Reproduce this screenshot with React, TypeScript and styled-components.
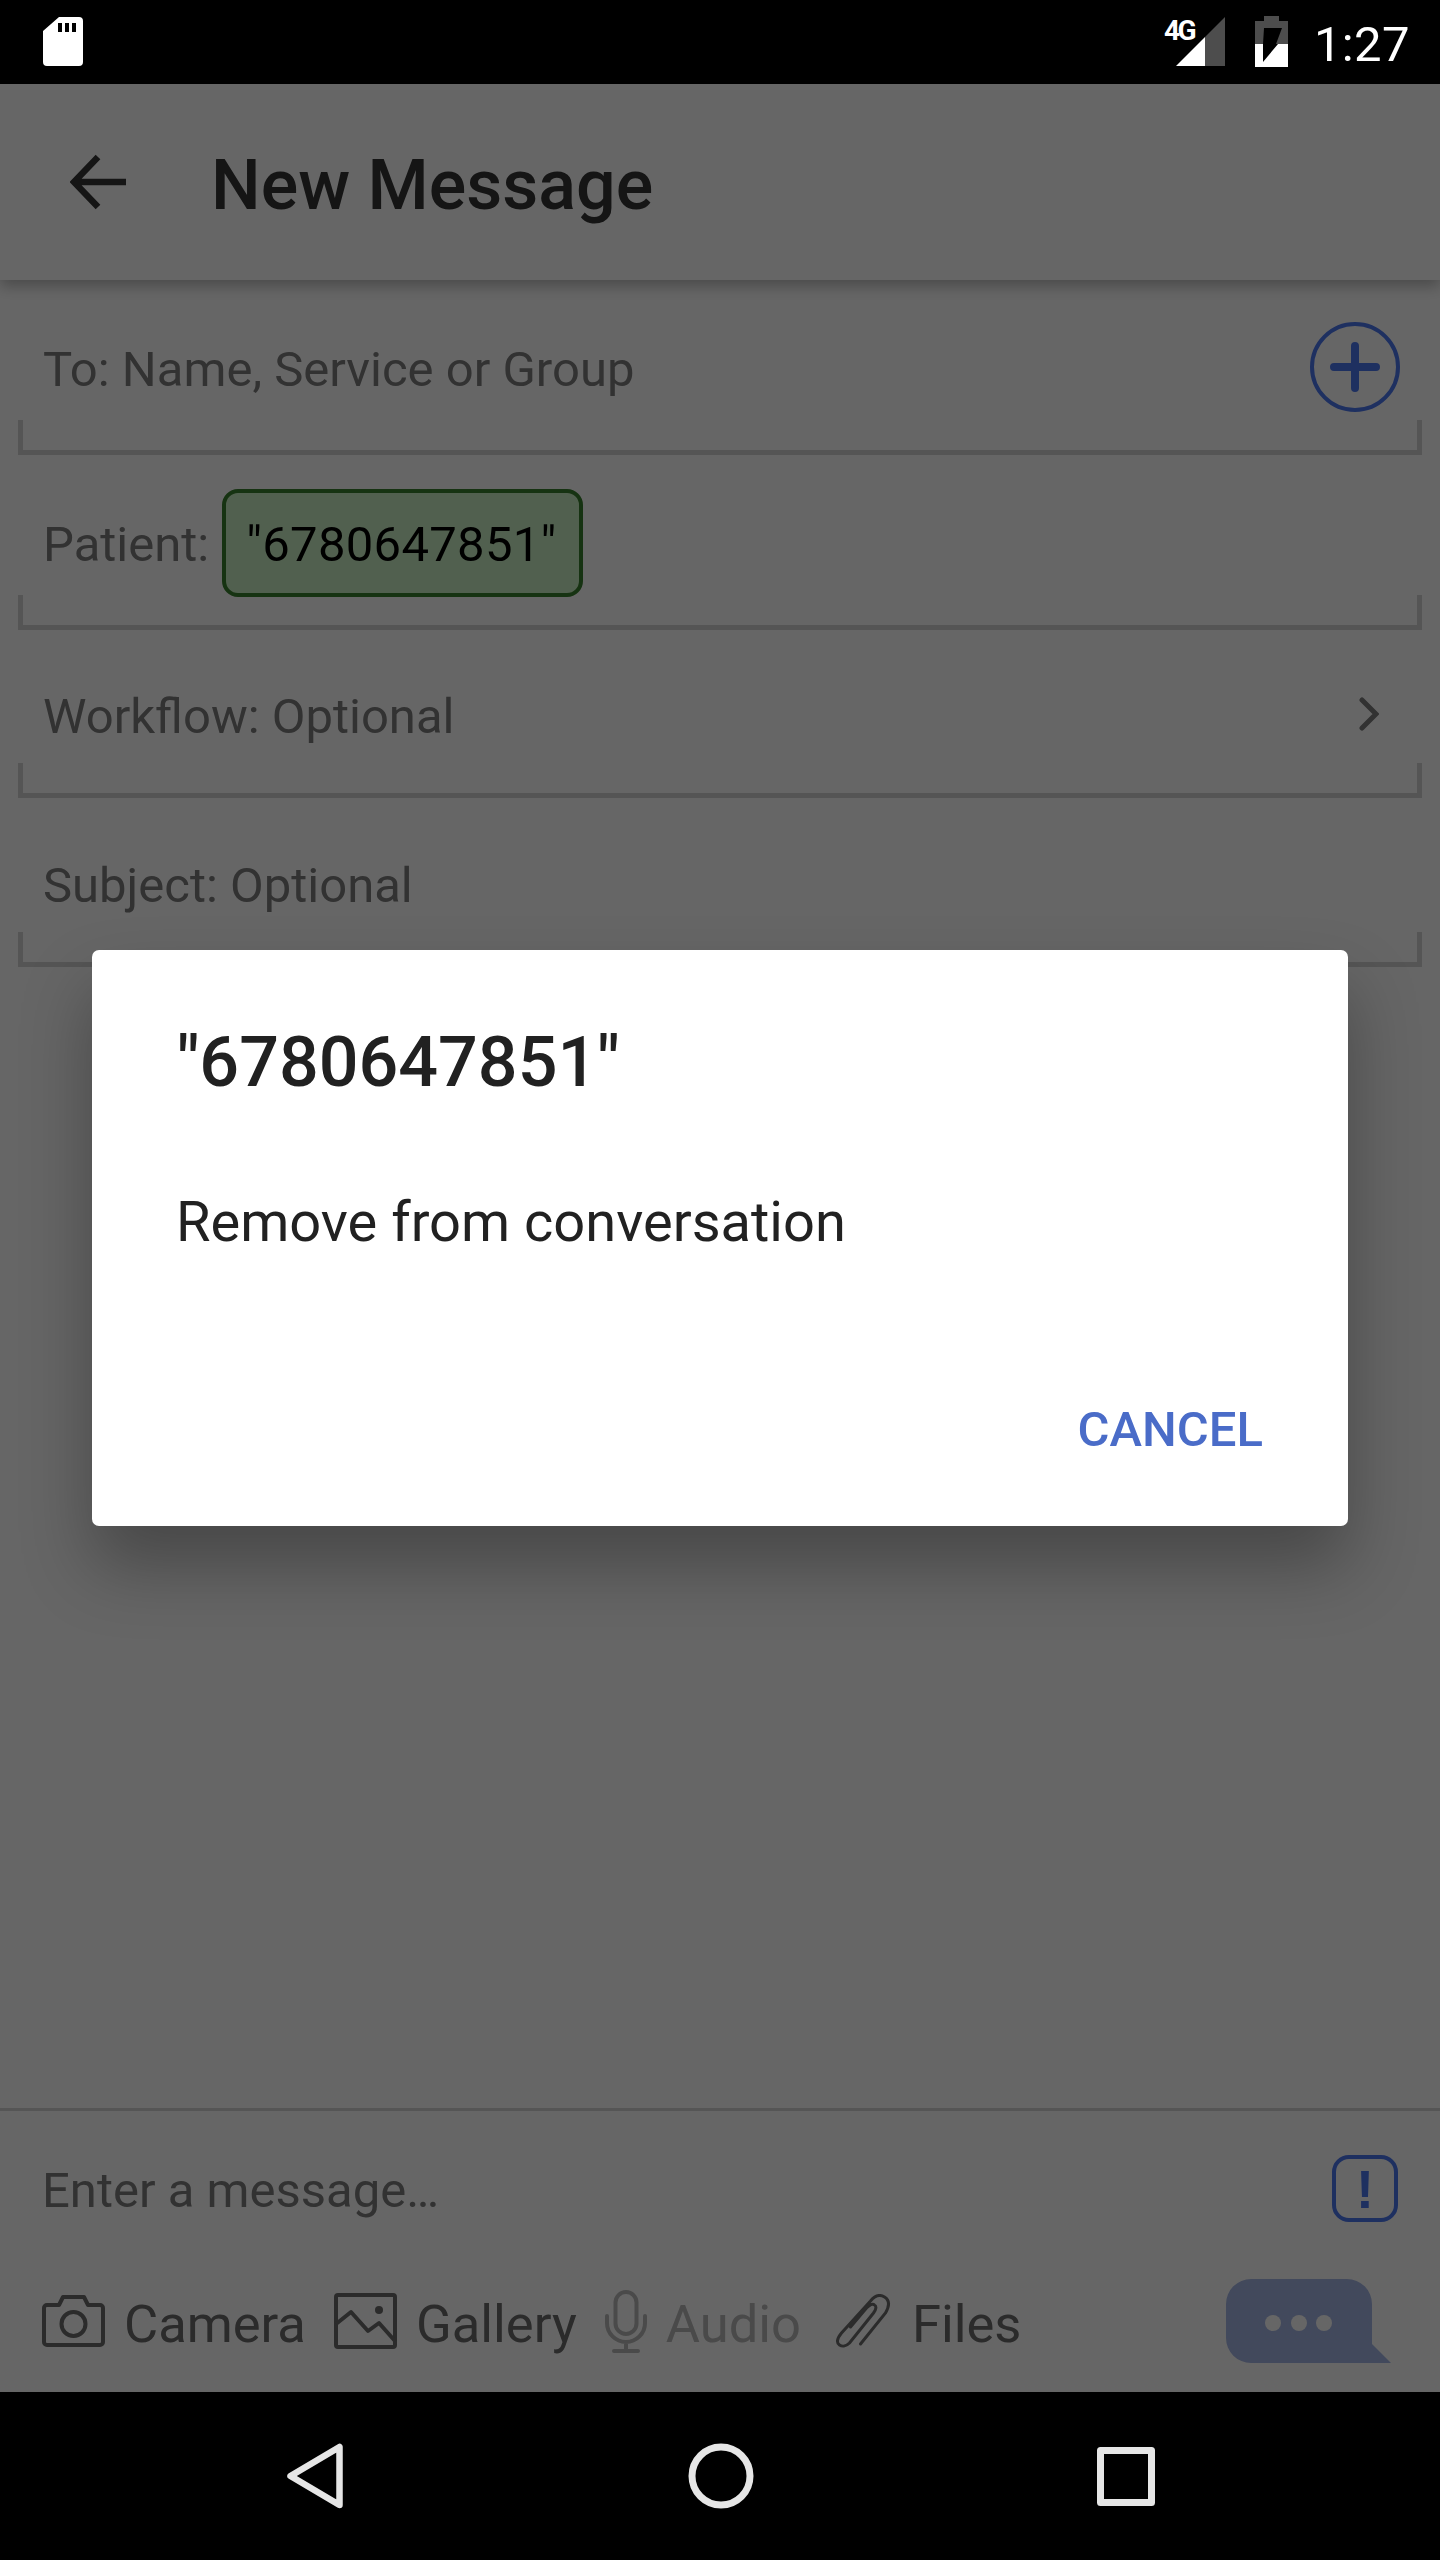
import React from "react";
import styled, { createGlobalStyle } from "styled-components";

const GlobalStyle = createGlobalStyle`
  html, body {
    margin: 0;
    padding: 0;
    background: #000;
  }
  * {
    box-sizing: border-box;
  }
`;

const Phone = styled.div`
  width: 1440px;
  height: 2560px;
  display: flex;
  flex-direction: column;
  font-family: Roboto, "Liberation Sans", sans-serif;
  overflow: hidden;
`;

const StatusBar = styled.div`
  height: 84px;
  flex: none;
  background: #000;
  display: flex;
  align-items: flex-start;
  padding: 16px 30px 0 43px;
`;

const StatusRight = styled.div`
  margin-left: auto;
  display: flex;
  align-items: flex-start;
`;

const SignalWrap = styled.div`
  position: relative;
  width: 49px;
  height: 50px;
  margin: 1px 30px 0 0;
`;

const NetworkLabel = styled.span`
  position: absolute;
  left: -12px;
  top: -1px;
  font-size: 28px;
  line-height: 30px;
  font-weight: 700;
  letter-spacing: -2.4px;
  color: #fff;
`;

const BatteryIcon = styled.svg`
  margin-right: 26px;
  flex: none;
`;

const Clock = styled.span`
  font-size: 49px;
  line-height: 58px;
  color: #fff;
  letter-spacing: 0.4px;
`;

const Screen = styled.div`
  position: relative;
  flex: 1;
  display: flex;
  flex-direction: column;
  background: #fff;
`;

const Toolbar = styled.header`
  position: relative;
  z-index: 1;
  height: 196px;
  flex: none;
  background: #fff;
  display: flex;
  align-items: center;
  padding-left: 70px;
  box-shadow: 0 6px 14px rgba(0, 0, 0, 0.28);
`;

const Title = styled.h1`
  margin: 6px 0 0 85px;
  font-size: 70px;
  line-height: 82px;
  font-weight: 500;
  color: #353535;
`;

const Form = styled.div`
  flex: 1;
  display: flex;
  flex-direction: column;
`;

const Field = styled.div`
  display: flex;
  flex-direction: column;
`;

const FieldBody = styled.div<{ $height: number; $top: number }>`
  height: ${(p) => p.$height}px;
  padding: ${(p) => p.$top}px 40px 0 43px;
  display: flex;
  align-items: baseline;
`;

const FieldLabel = styled.span`
  font-size: 49px;
  line-height: 60px;
  color: #7d7d7d;
`;

const Bracket = styled.div`
  height: 35px;
  margin: 0 18px;
  border: solid #d4d4d4;
  border-width: 0 5px 5px;
`;

const Chip = styled.span`
  margin-left: 13px;
  padding: 22px 22px 18px 20px;
  border: 4px solid #397f2d;
  border-radius: 16px;
  background: #cbf0c5;
  color: #000;
  font-size: 49px;
  line-height: 60px;
  letter-spacing: 0.3px;
`;

const FieldAction = styled.svg<{ $offset: number; $right?: number }>`
  margin-left: auto;
  margin-right: ${(p) => p.$right ?? 0}px;
  align-self: flex-start;
  margin-top: ${(p) => p.$offset}px;
  flex: none;
`;

const Composer = styled.div`
  height: 284px;
  flex: none;
  border-top: 3px solid #d4d4d4;
  display: flex;
  flex-direction: column;
`;

const MessageRow = styled.div`
  height: 164px;
  padding: 44px 42px 0;
  display: flex;
  align-items: flex-start;
  justify-content: space-between;
`;

const Placeholder = styled.span`
  margin-top: 6px;
  font-size: 49px;
  line-height: 60px;
  color: #7d7d7d;
`;

const PriorityBox = styled.div`
  width: 66px;
  height: 67px;
  border: 4px solid #4d78f0;
  border-radius: 17px;
  color: #4d78f0;
  display: flex;
  align-items: center;
  justify-content: center;
  font-family: "Liberation Sans", sans-serif;
  font-size: 54px;
  font-weight: 700;
  line-height: 1;
`;

const ToolRow = styled.div`
  display: flex;
  align-items: center;
  gap: 28px;
  padding: 0 49px 0 42px;
  height: 92px;
`;

const Tool = styled.div<{ $disabled?: boolean }>`
  display: flex;
  align-items: center;
  gap: 19px;
  font-size: 52.5px;
  line-height: 60px;
  color: ${(p) => (p.$disabled ? "#b8b8b8" : "#6b6b6b")};
`;

const ToolLabel = styled.span`
  padding-top: 6px;
`;

const SendButton = styled.svg`
  margin-left: auto;
  flex: none;
`;

const Scrim = styled.div`
  position: absolute;
  inset: 0;
  z-index: 2;
  background: rgba(0, 0, 0, 0.6);
  display: flex;
  align-items: center;
  justify-content: center;
`;

const Dialog = styled.div`
  width: 1256px;
  height: 576px;
  padding: 71px 85px 0;
  background: #fff;
  border-radius: 7px;
  box-shadow: 0 40px 70px rgba(0, 0, 0, 0.3);
  display: flex;
  flex-direction: column;
`;

const DialogTitle = styled.h2`
  margin: 0;
  font-size: 70px;
  line-height: 82px;
  font-weight: 500;
  color: #212121;
`;

const DialogBody = styled.p`
  margin: 86px 0 0 -1px;
  font-size: 56px;
  line-height: 66px;
  color: #212121;
`;

const DialogActions = styled.div`
  margin-top: 146px;
  display: flex;
  justify-content: flex-end;
`;

const CancelButton = styled.span`
  font-size: 49px;
  line-height: 58px;
  font-weight: 500;
  color: #4a6cc8;
`;

const NavBar = styled.nav`
  height: 168px;
  flex: none;
  background: #000;
  display: flex;
  align-items: center;
  gap: 341px;
  padding-left: 284px;
`;

function BackIcon() {
  return (
    <svg width="56" height="56" viewBox="0 0 56 56" fill="none" stroke="#353535" strokeWidth="6.5">
      <path d="M4 28H56M28 3L4 28l24 25" />
    </svg>
  );
}

function SdIcon() {
  return (
    <svg width="40" height="50" viewBox="0 0 40 50">
      <path
        fill="#fff"
        fillRule="evenodd"
        d="M16 1H36a4 4 0 0 1 4 4V46a4 4 0 0 1-4 4H4a4 4 0 0 1-4-4V15zM15 7V16h4V7zM22 7V16h4V7zM29 7V16h4V7z"
      />
    </svg>
  );
}

function SignalIcon() {
  return (
    <svg width="49" height="50" viewBox="0 0 49 50">
      <path fill="#4d4d4d" d="M49 0V49H29V20z" />
      <path fill="#fff" d="M29 20V49H0z" />
    </svg>
  );
}

function BatteryGlyph() {
  return (
    <BatteryIcon width="33" height="51" viewBox="0 0 33 51">
      <path fill="#4d4d4d" d="M9 0H24V5H33V28H0V5H9z" />
      <path fill="#fff" d="M0 28H33V51H0z" />
      <path fill="#000" d="M9 12H27L21 28H23L8 46V28H8z" />
    </BatteryIcon>
  );
}

function CameraIcon() {
  return (
    <svg width="63" height="52" viewBox="0 0 63 52" fill="none" stroke="#6b6b6b" strokeWidth="4" strokeLinejoin="round">
      <path d="M5 10H17L21 2H42L46 10H58a3 3 0 0 1 3 3V47a3 3 0 0 1-3 3H5a3 3 0 0 1-3-3V13a3 3 0 0 1 3-3z" />
      <circle cx="31.5" cy="29" r="12" />
    </svg>
  );
}

function GalleryIcon() {
  return (
    <svg width="63" height="56" viewBox="0 0 63 56" fill="none" stroke="#6b6b6b" strokeWidth="4" strokeLinejoin="round">
      <rect x="2" y="2" width="59" height="52" rx="2" />
      <path d="M2 31L17 19L34 38L45 30L61 48" />
      <circle cx="45" cy="17" r="4" fill="#6b6b6b" stroke="none" />
    </svg>
  );
}

function MicIcon() {
  return (
    <svg width="42" height="63" viewBox="0 0 42 63" fill="none" stroke="#b8b8b8" strokeWidth="4" strokeLinecap="round">
      <rect x="10.5" y="2" width="21" height="42" rx="10.5" />
      <path d="M2 26V33a19 19 0 0 0 38 0V26M21 52V61M9 61H33" />
    </svg>
  );
}

function ClipIcon() {
  return (
    <svg width="64" height="54" viewBox="-7.5 0 64 54" fill="none" stroke="#6b6b6b" strokeWidth="3" strokeLinecap="round">
      <path d="M24 50L49 19C53 12 53 6 48 3C43 0 38 2 34 7L5 39C0 45 0 49 3 51C6 53 10 52 13 49L37 19C40 15 40 12 38 11C36 9 33 11 30 14L14 33" />
    </svg>
  );
}

export default function App() {
  return (
    <>
      <GlobalStyle />
      <Phone>
        <StatusBar>
          <SdIcon />
          <StatusRight>
            <SignalWrap>
              <NetworkLabel>4G</NetworkLabel>
              <SignalIcon />
            </SignalWrap>
            <BatteryGlyph />
            <Clock>1:27</Clock>
          </StatusRight>
        </StatusBar>

        <Screen>
          <Toolbar>
            <BackIcon />
            <Title>New Message</Title>
          </Toolbar>

          <Form>
            <Field>
              <FieldBody $height={140} $top={60}>
                <FieldLabel>To: Name, Service or Group</FieldLabel>
                <FieldAction $offset={-18} width="90" height="90" viewBox="0 0 90 90" fill="none" stroke="#4d78f0">
                  <circle cx="45" cy="45" r="43" strokeWidth="4" />
                  <path d="M45 24V66M24 45H66" strokeWidth="8" strokeLinecap="round" />
                </FieldAction>
              </FieldBody>
              <Bracket />
            </Field>
            <Field>
              <FieldBody $height={140} $top={34}>
                <FieldLabel>Patient:</FieldLabel>
                <Chip>"6780647851"</Chip>
              </FieldBody>
              <Bracket />
            </Field>
            <Field>
              <FieldBody $height={133} $top={57}>
                <FieldLabel>Workflow: Optional</FieldLabel>
                <FieldAction $offset={10} $right={21} width="20" height="34" viewBox="0 0 20 34" fill="none" stroke="#7d7d7d" strokeWidth="5" strokeLinecap="round">
                  <path d="M3 3L17 17L3 31" />
                </FieldAction>
              </FieldBody>
              <Bracket />
            </Field>
            <Field>
              <FieldBody $height={134} $top={58}>
                <FieldLabel>Subject: Optional</FieldLabel>
              </FieldBody>
              <Bracket />
            </Field>
          </Form>

          <Composer>
            <MessageRow>
              <Placeholder>Enter a message…</Placeholder>
              <PriorityBox>!</PriorityBox>
            </MessageRow>
            <ToolRow>
              <Tool>
                <CameraIcon />
                <ToolLabel>Camera</ToolLabel>
              </Tool>
              <Tool>
                <GalleryIcon />
                <ToolLabel>Gallery</ToolLabel>
              </Tool>
              <Tool $disabled>
                <MicIcon />
                <ToolLabel>Audio</ToolLabel>
              </Tool>
              <Tool>
                <ClipIcon />
                <ToolLabel>Files</ToolLabel>
              </Tool>
              <SendButton width="165" height="84" viewBox="0 0 165 84">
                <path fill="#a6b7e6" d="M25 0H121A25 25 0 0 1 146 25V65L165 84H25A25 25 0 0 1 0 59V25A25 25 0 0 1 25 0z" />
                <circle cx="47" cy="44" r="8" fill="#fff" />
                <circle cx="73" cy="44" r="8" fill="#fff" />
                <circle cx="98" cy="44" r="8" fill="#fff" />
              </SendButton>
            </ToolRow>
          </Composer>

          <Scrim>
            <Dialog>
              <DialogTitle>"6780647851"</DialogTitle>
              <DialogBody>Remove from conversation</DialogBody>
              <DialogActions>
                <CancelButton>CANCEL</CancelButton>
              </DialogActions>
            </Dialog>
          </Scrim>
        </Screen>

        <NavBar>
          <svg width="63" height="66" viewBox="0 0 63 66" fill="none" stroke="#e6e6e6" strokeWidth="6.5" strokeLinejoin="round">
            <path d="M55.5 4V62L6.5 33z" />
          </svg>
          <svg width="67" height="66" viewBox="0 0 67 66" fill="none" stroke="#e6e6e6" strokeWidth="7">
            <circle cx="33" cy="33" r="29" />
          </svg>
          <svg width="60" height="59" viewBox="0 0 60 59" fill="none" stroke="#e6e6e6" strokeWidth="7" strokeLinejoin="round">
            <rect x="4.5" y="3.5" width="51" height="52" />
          </svg>
        </NavBar>
      </Phone>
    </>
  );
}
